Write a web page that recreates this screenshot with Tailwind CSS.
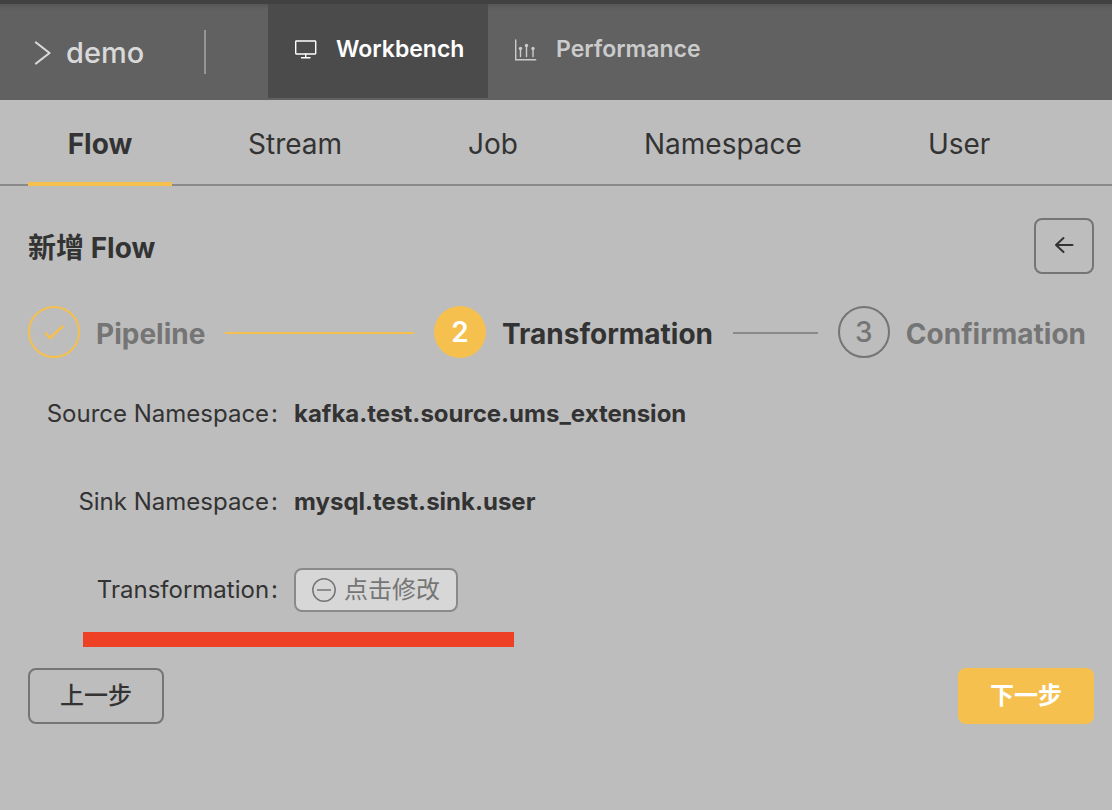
<!DOCTYPE html>
<html lang="zh-CN">
<head>
<meta charset="utf-8">
<meta name="viewport" content="width=device-width, initial-scale=1">
<title>demo - Workbench</title>
<script src="https://cdn.jsdelivr.net/npm/@tailwindcss/browser@4"></script>
</head>
<body class="min-h-screen bg-[#bdbdbd] font-[Inter,'Noto_Sans_CJK_SC',sans-serif] text-[#333333]">
<header class="flex h-25 border-t-4 border-[#414141] bg-[#616161] bg-linear-to-b from-[#575757] to-[#616161] to-6% pb-0.5 whitespace-nowrap">
  <div class="flex w-67 shrink-0 items-center pt-1 pl-8">
    <svg class="mr-2.5 size-6 shrink-0 text-[#d9d9d9]" viewBox="0 0 24 24" fill="none" stroke="currentColor" stroke-width="2.200" stroke-linecap="round" stroke-linejoin="round" aria-hidden="true"><path d="M4 1.500 17.500 12 4 22.500"/></svg>
    <a href="#" class="text-[29px] leading-9 font-medium text-[#d9d9d9]">demo</a>
    <span class="mr-15.5 mb-0.5 ml-auto h-11 w-0.5 bg-[#959595]"></span>
  </div>
  <nav class="flex text-[23px] font-semibold" aria-label="Main">
    <a href="#" class="flex w-55 items-center gap-4.5 bg-[#4b4b4b] pb-0.5 pl-6.5 text-white">
      <svg class="h-6 w-6 shrink-0" viewBox="0 0 24 24" fill="none" stroke="currentColor" stroke-width="1.400" stroke-linecap="round" aria-hidden="true"><rect x="1.700" y="3" width="20" height="13" rx=".7"/><path d="M11.700 16V19.500M7.500 19.700H16"/></svg>
      <span class="pb-0.5">Workbench</span>
    </a>
    <a href="#" class="flex items-center gap-4.5 pb-0.5 pl-6.5 text-[#cbcbcb]">
      <svg class="h-6 w-6 shrink-0" viewBox="0 0 24 24" fill="none" stroke="currentColor" stroke-width="1.400" stroke-linecap="round" aria-hidden="true"><path d="M1.700 2V21.700H21.700M6.500 11V18.500M12.500 8V18.500M19 11V18.500"/><g fill="currentColor" stroke="none"><circle cx="6.500" cy="10.500" r="1.700"/><circle cx="12.500" cy="7.500" r="1.700"/><circle cx="19" cy="10.500" r="1.700"/></g></svg>
      <span class="pb-0.5">Performance</span>
    </a>
  </nav>
</header>

<nav class="flex h-21.5 border-b-2 border-[#8a8a8a] pl-7 text-[28px] leading-8 whitespace-nowrap" aria-label="Sections">
  <a href="#" aria-current="page" class="-mb-0.5 mr-9 w-36 border-b-4 border-[#f5c04e] pt-7 text-center font-bold">Flow</a>
  <a href="#" class="mr-[46px] px-10 pt-7">Stream</a>
  <a href="#" class="mr-[46px] px-10 pt-7">Job</a>
  <a href="#" class="mr-[46px] px-10 pt-7">Namespace</a>
  <a href="#" class="px-10 pt-7">User</a>
</nav>

<main class="pt-8 pr-4.5 pb-8 pl-7">
  <div class="flex items-center justify-between">
    <h1 class="pt-1 text-[28px] leading-10 font-bold">新增 Flow</h1>
    <button type="button" aria-label="Back" class="flex h-14 w-15 items-center justify-center rounded-lg border-2 border-[#757575]">
      <svg class="mb-0.5 size-6" viewBox="0 0 24 24" fill="none" stroke="currentColor" stroke-width="2" stroke-linecap="round" stroke-linejoin="round" aria-hidden="true"><path d="M20.500 12H4M11.500 5 4 12 11.500 19"/></svg>
    </button>
  </div>

  <ol class="mt-8 flex items-center text-[28px] leading-10 font-bold whitespace-nowrap">
    <li class="flex flex-[406] items-center text-[#757575]">
      <span class="mr-4 flex size-13 shrink-0 items-center justify-center rounded-full border-2 border-[#f5c04e] text-[#f5c04e]">
        <svg class="size-6" viewBox="0 0 24 24" fill="none" stroke="currentColor" stroke-width="2.500" stroke-linecap="round" stroke-linejoin="round" aria-hidden="true"><path d="M4 13.500 8 18 20.500 6.500"/></svg>
      </span>
      <span class="pt-1">Pipeline</span>
      <span class="mx-5 mt-0.5 h-0.5 flex-1 bg-[#f5c04e]"></span>
    </li>
    <li class="flex flex-[404] items-center" aria-current="step">
      <span class="mr-4 flex size-13 shrink-0 items-center justify-center rounded-full bg-[#f5c04e] font-semibold text-white">2</span>
      <span class="pt-1">Transformation</span>
      <span class="mx-5 mt-0.5 h-0.5 flex-1 bg-[#8a8a8a]"></span>
    </li>
    <li class="flex items-center text-[#757575]">
      <span class="mr-4 flex size-13 shrink-0 items-center justify-center rounded-full border-2 border-[#757575] font-medium">3</span>
      <span class="pt-1 pr-2">Confirmation</span>
    </li>
  </ol>

  <dl class="mt-[34px] grid grid-cols-[250px_1fr] items-center gap-x-4 gap-y-11 text-2xl leading-11 whitespace-nowrap">
    <dt class="text-right">Source Namespace<span class="ml-0.5">:</span></dt>
    <dd class="font-bold">kafka.test.source.ums_extension</dd>
    <dt class="text-right">Sink Namespace<span class="ml-0.5">:</span></dt>
    <dd class="font-bold">mysql.test.sink.user</dd>
    <dt class="text-right">Transformation<span class="ml-0.5">:</span></dt>
    <dd>
      <button type="button" class="flex h-11 items-center gap-2 rounded-lg border-2 border-[#8a8a8a] bg-[#d7d7d7] px-4 text-[#757575]">
        <svg class="size-6" viewBox="0 0 24 24" fill="none" stroke="currentColor" stroke-width="1.500" aria-hidden="true"><circle cx="12" cy="12" r="11.200"/><path d="M5 12H19"/></svg>
        点击修改
      </button>
    </dd>
  </dl>
  <div class="mt-5 ml-[55px] h-[15px] w-[431px] bg-[#ed4024]"></div>

  <div class="mt-[21px] flex justify-between text-2xl">
    <button type="button" class="h-14 w-34 rounded-lg border-2 border-[#757575] font-medium">上一步</button>
    <button type="button" class="h-14 w-34 rounded-lg bg-[#f5c04e] font-bold text-white">下一步</button>
  </div>
</main>
</body>
</html>
